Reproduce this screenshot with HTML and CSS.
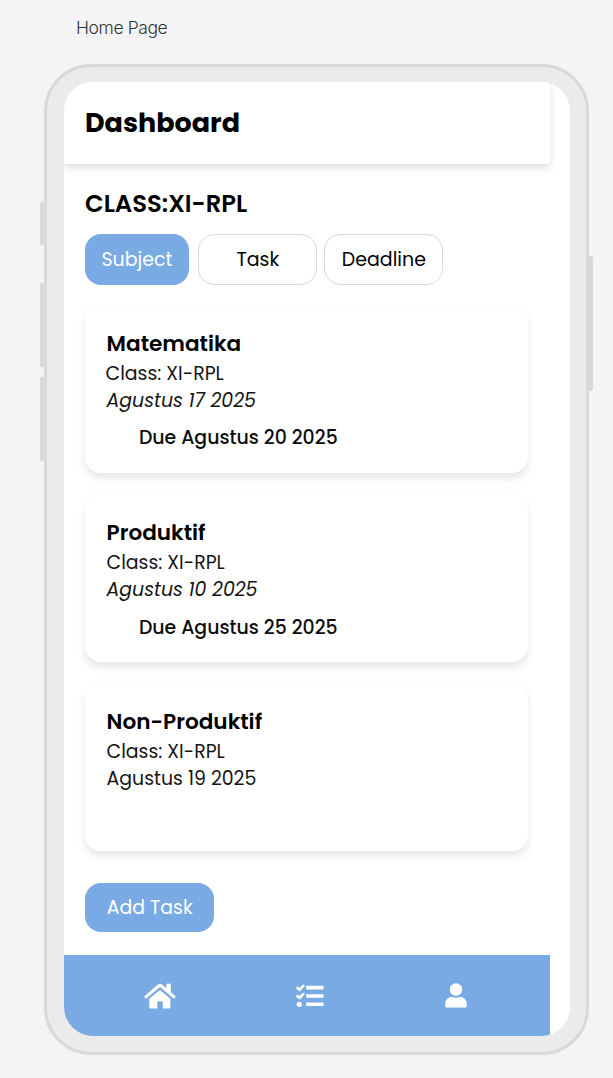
FILE: index.html
```html
<!DOCTYPE html>
<html lang="id">
<head>
<meta charset="utf-8">
<title>Home Page</title>
<link rel="stylesheet" href="styles.css">
</head>
<body>
<div class="frame-label"><span>Home Page</span></div>
<div class="phone">
  <i class="key key-mute"></i><i class="key key-up"></i><i class="key key-down"></i><i class="key key-power"></i>
  <div class="screen">
    <header class="header"><h1>Dashboard</h1></header>
    <main class="content">
      <h2>CLASS:XI-RPL</h2>
      <div class="tabs">
        <button class="tab active">Subject</button>
        <button class="tab task">Task</button>
        <button class="tab deadline">Deadline</button>
      </div>
      <div class="cards">
        <section class="card">
          <h3>Matematika</h3>
          <p class="class nudge">Class: XI-RPL</p>
          <p class="date italic">Agustus 17 2025</p>
          <p class="due">Due Agustus 20 2025</p>
        </section>
        <section class="card">
          <h3>Produktif</h3>
          <p class="class">Class: XI-RPL</p>
          <p class="date italic">Agustus 10 2025</p>
          <p class="due due-low">Due Agustus 25 2025</p>
        </section>
        <section class="card">
          <h3>Non-Produktif</h3>
          <p class="class">Class: XI-RPL</p>
          <p class="date">Agustus 19 2025</p>
        </section>
      </div>
      <button class="add">Add Task</button>
    </main>
    <nav class="nav">
      <svg class="home" width="32" height="26" viewBox="0 0 32 26">
        <path d="M2 13.8 L14.6 3 Q16 1.9 17.4 3 L30 13.8" fill="none" stroke="#fff" stroke-width="3" stroke-linecap="round" stroke-linejoin="round"/>
        <path d="M22.4 .8h4.400v9.400l-4.400-3.700z" fill="#fff"/>
        <path d="M16 7 L26.400 15.800V24.400a1 1 0 0 1-1 1h-6.600v-6.800h-5.500v6.800H6.300a1 1 0 0 1-1-1v-8.600z" fill="#fff"/>
      </svg>
      <svg class="list" width="28" height="24" viewBox="0 0 28 24">
        <path d="M1.5 4 3.5 5.8 7.3 1.900M1.500 12.200 3.500 14 7.300 10.100" fill="none" stroke="#fff" stroke-width="2.600" stroke-linecap="round" stroke-linejoin="round"/>
        <circle cx="3.3" cy="20.3" r="2.600" fill="#fff"/>
        <path d="M10.200 1.800h17.300v3.600H10.200zM10.200 10.200h17.300v3.500H10.200zM10.200 18.500h17.300v3.500H10.200z" fill="#fff"/>
      </svg>
      <svg class="user" width="22" height="25" viewBox="0 0 22 25">
        <circle cx="11" cy="6.500" r="6.200" fill="#fff"/>
        <path d="M.2 21.500C.2 16.500 3 14 7 14q1.400 0 2.600.6 1.400.5 2.800 0Q13.600 14 15 14c4 0 6.800 2.500 6.800 7.500V23q0 1.600-1.600 1.600H1.800Q.2 24.600.2 23z" fill="#fff"/>
      </svg>
    </nav>
  </div>
</div>
</body>
</html>
```
FILE: styles.css
```css
* { box-sizing: border-box; }
body { margin: 0; height: 1078px; overflow: hidden; background: #f4f4f4; font-family: Poppins, Inter, sans-serif; color: #000; }
h1, h2, h3, p { margin: 0; white-space: nowrap; }
button { font: inherit; color: #000; padding: 0; border: 0; white-space: nowrap; }

.frame-label { height: 64px; padding: 16px 0 0 76px; font-family: Inter, sans-serif; font-weight: 300; font-size: 17.500px; letter-spacing: -.4px; line-height: 24px; color: #333; }

.phone { position: relative; width: 545px; height: 991px; margin-left: 44px; padding: 15px; border: 3px solid #d9d9d9; border-radius: 47px; background: #ebebeb; }
.key { position: absolute; width: 4px; left: -7px; background: #d9d9d9; border-radius: 2px 0 0 2px; }
.key-mute { top: 135px; height: 43px; }
.key-up { top: 216px; height: 84px; }
.key-down { top: 310px; height: 84px; }
.key-power { top: 189px; height: 135px; left: auto; right: -7px; border-radius: 0 2px 2px 0; }

.screen { width: 506.500px; height: 954px; margin-left: 1.600px; border-radius: 29px; overflow: hidden; background: #fff; display: flex; flex-direction: column; }
.header { flex: none; width: 486px; height: 81.500px; padding: 24px 0 0 21.400px; background: #fff; box-shadow: 0 4px 8px rgba(0,0,0,.12); }
h1 { font-size: 27px; line-height: 34px; font-weight: 700; }

.content { flex: 1; padding: 24px 42.200px 0 21.400px; }
h2 { font-size: 24.300px; line-height: 32px; font-weight: 600; }
.tabs { display: flex; margin-top: 14px; height: 51px; }
.tab { height: 51px; border: 1px solid #d9d9dc; border-radius: 16px; background: #fff; font-size: 19px; }
.tab.active { width: 104px; border: 0; background: #7aaae3; color: #fff; margin-right: 9.400px; }
.tab.task { width: 119px; margin-right: 7px; }
.tab.deadline { width: 119px; }

.cards { display: grid; gap: 21px; margin-top: 20.500px; }
.card { height: 168px; padding: 24px 21.600px 0; border-radius: 16px; background: #fff; box-shadow: 0 5px 8px rgba(0,0,0,.1); }
h3 { font-size: 21.600px; line-height: 29px; font-weight: 600; }
.class, .date, .due { font-size: 18.900px; line-height: 27px; color: #151515; }
.class { margin-top: 2px; }
.nudge { margin-left: -1px; }
.italic { font-style: italic; }
.due { margin: 10px 0 0 32.400px; font-weight: 500; color: #0d0d0d; }
.due-low { margin-top: 11px; }

.add { display: block; width: 129.500px; height: 49px; margin-top: 32px; border-radius: 16px; background: #7aaae3; color: #fff; font-size: 18.900px; }
.nav { flex: none; width: 486px; height: 81px; background: #7aaae3; display: flex; align-items: center; padding-left: 80.500px; }
.list { margin-left: 119.500px; }
.user { margin-left: 121px; }
```
